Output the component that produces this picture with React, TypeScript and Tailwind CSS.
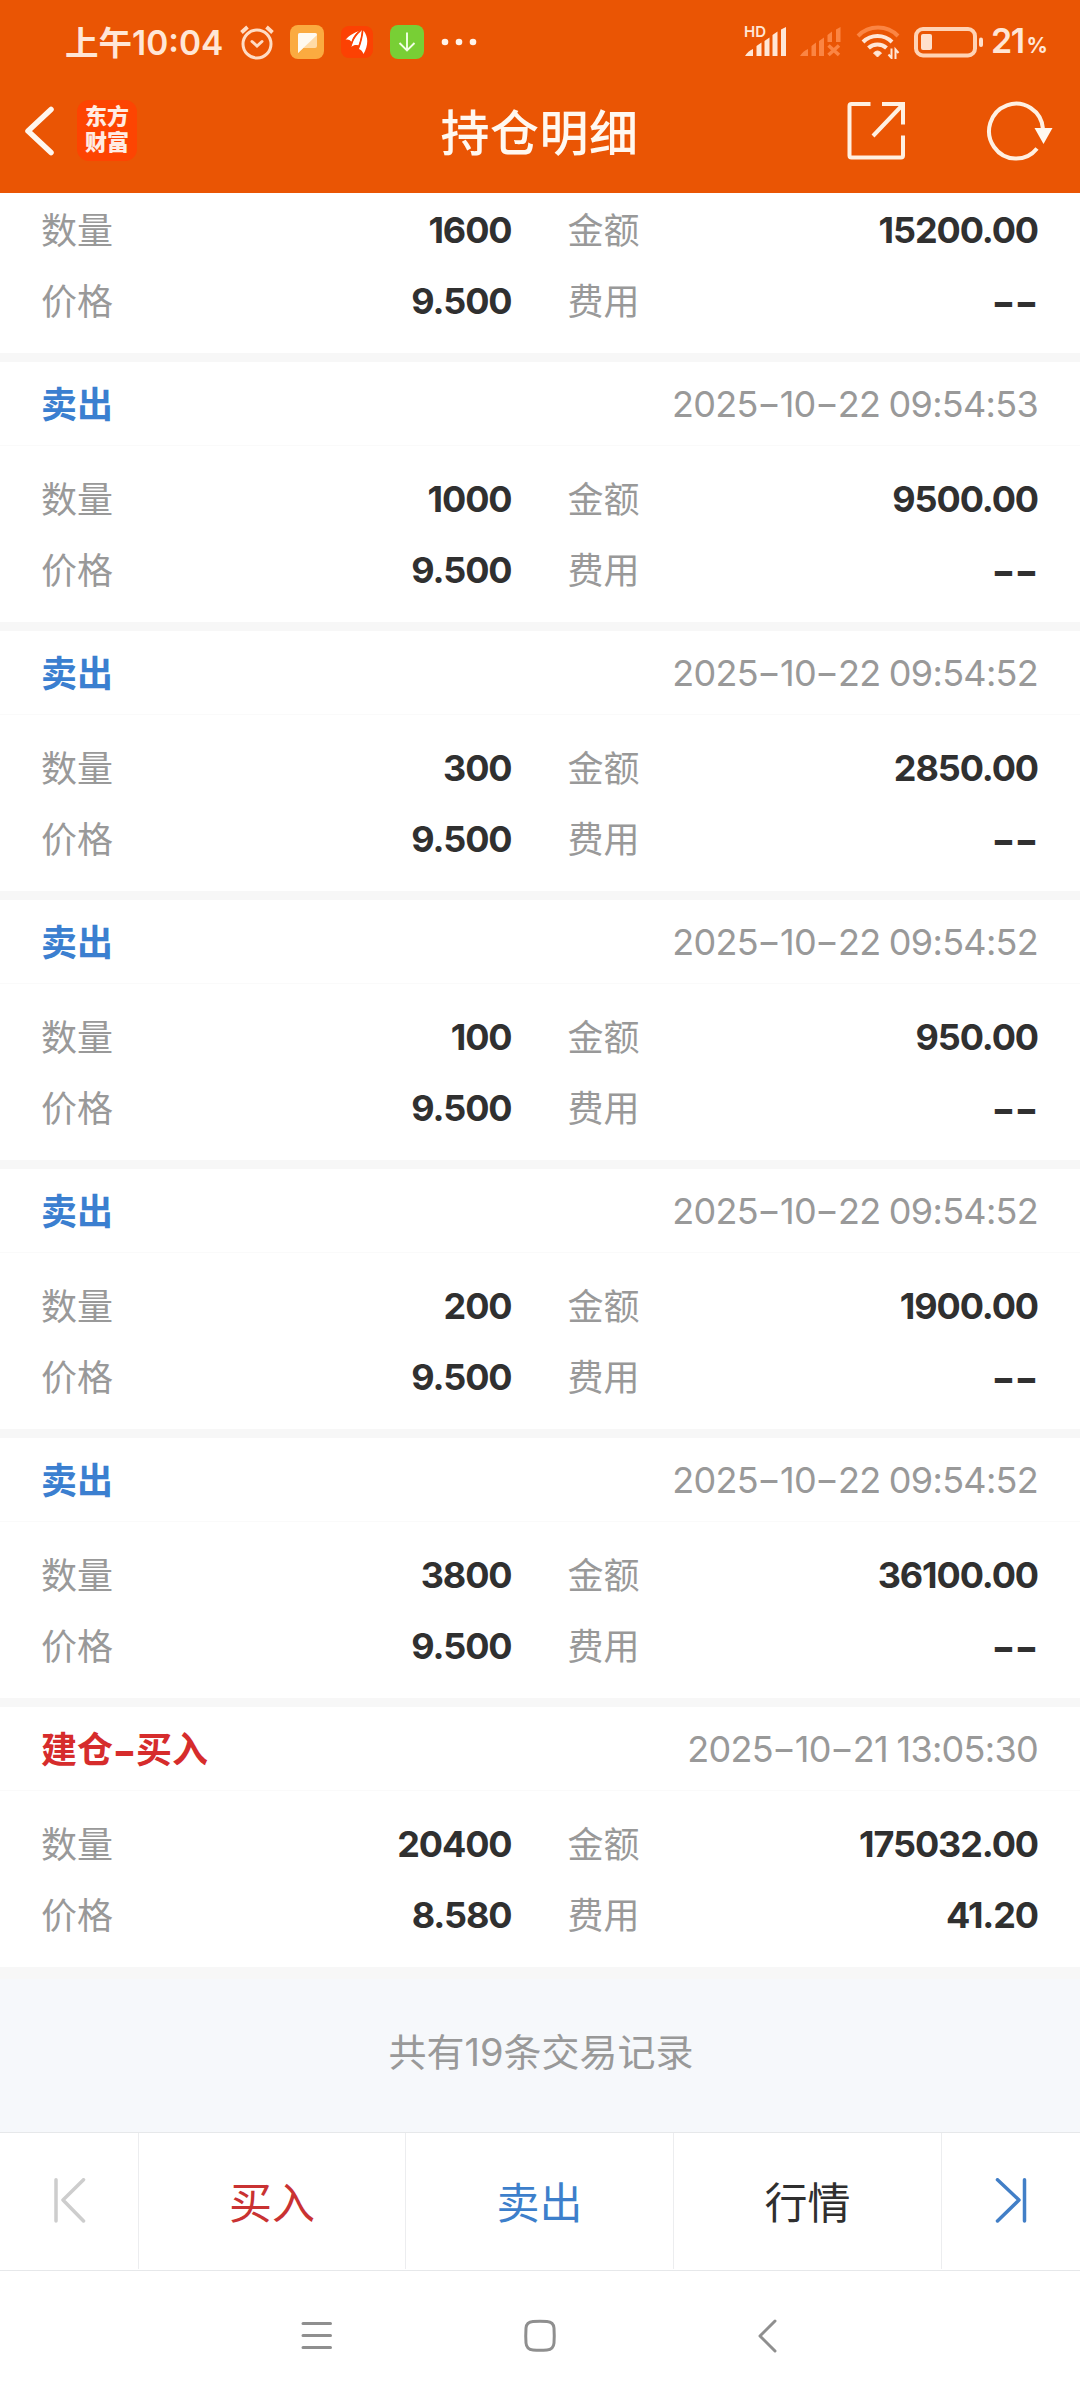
import React from "react";

type Trade = {
  title?: string;
  buy?: boolean;
  time?: string;
  qty: string;
  amount: string;
  price: string;
  fee: string;
};

const trades: Trade[] = [
  { qty: "1600", amount: "15200.00", price: "9.500", fee: "--" },
  { title: "卖出", time: "2025-10-22 09:54:53", qty: "1000", amount: "9500.00", price: "9.500", fee: "--" },
  { title: "卖出", time: "2025-10-22 09:54:52", qty: "300", amount: "2850.00", price: "9.500", fee: "--" },
  { title: "卖出", time: "2025-10-22 09:54:52", qty: "100", amount: "950.00", price: "9.500", fee: "--" },
  { title: "卖出", time: "2025-10-22 09:54:52", qty: "200", amount: "1900.00", price: "9.500", fee: "--" },
  { title: "卖出", time: "2025-10-22 09:54:52", qty: "3800", amount: "36100.00", price: "9.500", fee: "--" },
  { title: "建仓-买入", buy: true, time: "2025-10-21 13:05:30", qty: "20400", amount: "175032.00", price: "8.580", fee: "41.20" },
];

// Hyphens are drawn as wide as a digit.
function WideHyphens({ text, bold = false }: { text: string; bold?: boolean }) {
  return (
    <>
      {text.split(/(-)/).map((part, i) =>
        part === "-" ? (
          <span
            key={i}
            className={
              bold
                ? "inline-block w-[23px] scale-x-[1.45] scale-y-[1.2] text-center tracking-normal"
                : "inline-block w-[22px] scale-x-[1.45] text-center tracking-normal"
            }
          >
            -
          </span>
        ) : (
          part
        ),
      )}
    </>
  );
}

function StatusBar() {
  return (
    <div className="flex h-[84px] items-center pl-[65px] pr-[33px] text-[#ffe6d6]">
      <span className="w-[158px] whitespace-nowrap pt-[2px] text-[33.500px] leading-[40px] font-semibold">
        上午10:04
      </span>
      <svg className="ml-[16px] h-[36px] w-[36px]" viewBox="0 0 36 36" fill="none" stroke="#ffdcc4" strokeWidth="3" strokeLinecap="round">
        <circle cx="18" cy="20" r="14" />
        <path d="M2.500 8.500 L8.500 3 M33.500 8.500 L27.500 3" strokeWidth="3.800" strokeLinecap="butt" />
        <path d="M13 17.500 L18 22 L23 17.500" />
      </svg>
      <svg className="ml-[15px] h-[34px] w-[34px]" viewBox="0 0 34 34">
        <rect width="34" height="34" rx="8" fill="#fbab40" />
        <path d="M10 8 H25 Q27 8 27 10 V21 Q27 23 25 23 H13 L8 28 V10 Q8 8 10 8 Z" fill="#ffdba6" />
        <path d="M10 8 H25 Q27 8 27 10 L8 28 V10 Q8 8 10 8 Z" fill="#fffaf0" />
      </svg>
      <svg className="ml-[16px] h-[34px] w-[34px]" viewBox="0 0 34 34">
        <rect x="1" y="1" width="32" height="32" rx="8" fill="#fc4103" />
        <path d="M5.500 15 C10 9.500 14 8 20 5.500 C15 9 13 12 11.500 17 C9.500 14.500 7.500 14 5.500 15 Z" fill="#fff" />
        <path d="M11.500 22 C13 15 16.500 10 22 5 C21.500 11 20.500 16 18.500 20.500 C16 19.500 13.500 20 11.500 22 Z" fill="#fff" />
        <path d="M19 24 C21.500 18 23 11 23.500 5.500 C28.500 12 28.500 20 23.500 29 C22.500 26.500 21 24.500 19 24 Z" fill="#fff" />
        <path d="M11.500 18.500 C13 13 16 9 21 5 M18.500 22.500 C20.500 16.500 22 11 22.500 5" fill="none" stroke="#fc4103" strokeWidth="1.200" />
      </svg>
      <svg className="ml-[16px] h-[34px] w-[34px]" viewBox="0 0 34 34">
        <rect width="34" height="34" rx="8" fill="#78cf35" />
        <path d="M17 7.500 V25.500 M9.500 18 L17 25.500 L24.500 18" fill="none" stroke="#f1ffe5" strokeWidth="1.900" />
      </svg>
      <svg className="ml-[17px] h-[8px] w-[36px]" viewBox="0 0 36 8" fill="#fff3ea">
        <circle cx="4" cy="4" r="3.300" />
        <circle cx="18" cy="4" r="3.300" />
        <circle cx="32" cy="4" r="3.300" />
      </svg>

      <div className="ml-auto flex items-center">
        <div className="relative h-[30px] w-[41px]">
          <svg className="h-[30px] w-[41px]" viewBox="0 0 41 30" fill="#ffe6d6">
            <path d="M0 29 Q3 24 8 22 V29 Z M11.500 19 L16.500 15.500 V29 H11.500 Z M19.500 14 L24.500 10.500 V29 H19.500 Z M27.500 8 L32.500 4.500 V29 H27.500 Z M36 2.500 L41 0 V29 H36 Z" />
          </svg>
          <span className="absolute -left-[1px] -top-[3px] text-[15px] leading-[15px] font-semibold">HD</span>
        </div>
        <svg className="ml-[14px] h-[30px] w-[41px]" viewBox="0 0 41 30" fill="#fb8543">
          <path d="M0 29 Q3 24 8 22 V29 Z M11.500 19 L16 15.500 V29 H11.500 Z M19 14 L24 10.500 V29 H19 Z M27.500 8 L32 4.500 V15 H27.500 Z M36 2.500 L40.500 0 V15 H36 Z" />
          <path d="M28.500 18.500 L39 28 M39 18.500 L28.500 28" stroke="#fb8543" strokeWidth="3.600" />
        </svg>
        <svg className="ml-[15px] h-[34px] w-[44px]" viewBox="0 0 44 34" fill="none" stroke="#ffe6d6" strokeWidth="4">
          <path d="M2 11 A28 28 0 0 1 42 11" stroke="#fb8543" />
          <path d="M7 17 A20.500 20.500 0 0 1 36 17" />
          <path d="M12.500 23 A13 13 0 0 1 30.500 23" />
          <path d="M21.500 32 L17.500 28 Q21.500 24 25.500 28 Z" fill="#ffe6d6" stroke="#ffe6d6" strokeWidth="1" />
          <path d="M35.500 23.500 V33 L32.500 29.500 M39.500 34 V24.500 L42.500 28" strokeWidth="2" />
        </svg>
        <svg className="ml-[14px] h-[32px] w-[70px]" viewBox="0 0 70 32" fill="none">
          <rect x="2" y="3" width="59" height="26.500" rx="7" stroke="#ffd3b5" strokeWidth="4" />
          <rect x="7" y="8" width="11" height="16" rx="2" fill="#ffe0cc" />
          <rect x="65" y="11.500" width="4" height="9.500" rx="2" fill="#ffe0cc" />
        </svg>
        <div className="ml-[7px] flex w-[56px] items-baseline whitespace-nowrap pt-[2px] font-semibold">
          <span className="text-[34px] leading-[40px] tracking-[-1.500px]">21</span>
          <span className="ml-[3px] text-[21px] leading-[40px] font-bold">%</span>
        </div>
      </div>
    </div>
  );
}

function TitleBar() {
  return (
    <div className="grid h-[109px] grid-cols-[1fr_auto_1fr] items-center pb-[16px] pl-[23px] pr-[27px]">
      <div className="flex items-center">
        <svg className="h-[52px] w-[32px]" viewBox="0 0 32 52" fill="none" stroke="#fff6ee" strokeWidth="5.500" strokeLinecap="round" strokeLinejoin="round">
          <path d="M28 4.500 L5 26 L28 47.500" />
        </svg>
        <div className="ml-[22px] flex h-[61px] w-[60px] flex-col items-center justify-center rounded-[12px] bg-[#fd4402] pb-[3px] text-[22px] leading-[26px] font-black text-[#ffece4]">
          <span>东方</span>
          <span>财富</span>
        </div>
      </div>
      <h1 className="pt-[6px] pl-[3px] text-[49px] leading-[60px] font-medium tracking-[0.500px] text-[#fff8f0]">持仓明细</h1>
      <div className="flex items-center justify-end">
        <svg className="h-[60px] w-[60px]" viewBox="0 0 60 60" fill="none" stroke="#fff0e2" strokeWidth="4">
          <path d="M24.500 3 H5.500 Q3.500 3 3.500 5 V54.500 Q3.500 56.500 5.500 56.500 H55 Q57 56.500 57 54.500 V34.500" />
          <path d="M36 3 H57 V23.500 M56 4.500 L27 35" />
        </svg>
        <svg className="ml-[79px] h-[62px] w-[68px]" viewBox="0 0 68 62" fill="none">
          <path d="M58 29 A27 27.500 0 1 0 52 48.500" stroke="#fff0e2" strokeWidth="4" />
          <path d="M49.500 28 H67.500 L58.500 44 Z" fill="#fff8f0" />
        </svg>
      </div>
    </div>
  );
}

function Field({ label, value }: { label: string; value: string }) {
  return (
    <div className="flex h-[71px] items-center justify-between">
      <span className="pt-[2px] text-[36px] leading-[40px] text-[#999]">{label}</span>
      <span className="text-[36px] leading-[40px] font-bold tracking-[-1.100px] text-[#303030]">
        <WideHyphens text={value} bold />
      </span>
    </div>
  );
}

function TradeCard({ trade, last }: { trade: Trade; last: boolean }) {
  return (
    <section className={last ? "bg-white" : "border-b-[9px] border-[#f7f7f7] bg-white"}>
      {trade.title && (
        <div className="flex h-[84px] items-center justify-between border-b border-[#fafafa] pl-[41px] pr-[42px]">
          <span className={trade.buy ? "pt-[2px] text-[36px] leading-[40px] font-bold text-[#d62c2c]" : "pt-[2px] text-[36px] leading-[40px] font-bold text-[#3b7fd0]"}>
            <WideHyphens text={trade.title} bold />
          </span>
          <time className="whitespace-pre text-[36px] leading-[40px] tracking-[-0.700px] text-[#999] [word-spacing:-1px]">
            <WideHyphens text={trade.time ?? ""} />
          </time>
        </div>
      )}
      <div className={trade.title ? "grid h-[176px] grid-cols-2 content-start gap-x-[56px] pl-[41px] pr-[42px] pt-[17px]" : "grid h-[160px] grid-cols-2 content-start gap-x-[56px] pl-[41px] pr-[42px] pt-[1px]"}>
        <Field label="数量" value={trade.qty} />
        <Field label="金额" value={trade.amount} />
        <Field label="价格" value={trade.price} />
        <Field label="费用" value={trade.fee} />
      </div>
    </section>
  );
}

function BottomTabs() {
  return (
    <div className="grid h-[139px] grid-cols-[139px_267px_268px_268px_138px] divide-x divide-[#ecedef] border-y border-[#e6e8ea] bg-white pb-px text-[43px] leading-[50px]">
      <div className="flex items-center pl-[53px]">
        <svg className="h-[46px] w-[34px]" viewBox="0 0 34 46" fill="none" stroke="#cdcdcd" strokeWidth="3.500" strokeLinecap="round" strokeLinejoin="round">
          <path d="M3 1.750 V43 M30.500 1.750 L10 22 L30.500 43" />
        </svg>
      </div>
      <div className="flex items-center justify-center pt-[4px] text-[#c93232]">买入</div>
      <div className="flex items-center justify-center pt-[4px] text-[#3d7fcb]">卖出</div>
      <div className="flex items-center justify-center pt-[4px] text-[#2f2f2f]">行情</div>
      <div className="flex items-center pl-[53px]">
        <svg className="h-[46px] w-[34px]" viewBox="0 0 34 46" fill="none" stroke="#427fc7" strokeWidth="3.500" strokeLinecap="round" strokeLinejoin="round">
          <path d="M29.500 1.750 V43 M2.500 1.750 L24 22 L2.500 43" />
        </svg>
      </div>
    </div>
  );
}

function SystemNav() {
  return (
    <div className="flex flex-1 items-center bg-white pl-[300px]">
      <svg className="h-[34px] w-[34px]" viewBox="0 0 34 34" fill="none" stroke="#8f8f8f" strokeWidth="3" strokeLinecap="round">
        <path d="M3 4.500 H30.500 M3 16.500 H30.500 M3 28.500 H30.500" />
      </svg>
      <svg className="ml-[189px] h-[34px] w-[34px]" viewBox="0 0 34 34" fill="none" stroke="#8f8f8f" strokeWidth="3">
        <path d="M10 2.500 Q17 2 24 2.500 Q30.500 3 31 9 Q31.500 17 31 24 Q30.500 30.500 24 31 Q17 31.500 10 31 Q3.500 30.500 3 24 Q2.500 17 3 9 Q3.500 3 10 2.500 Z" />
      </svg>
      <svg className="ml-[199px] h-[34px] w-[24px]" viewBox="0 0 24 34" fill="none" stroke="#8f8f8f" strokeWidth="3" strokeLinecap="round" strokeLinejoin="round">
        <path d="M19 2 L4 17 L19 32" />
      </svg>
    </div>
  );
}

export default function App() {
  return (
    <main className="flex h-[2400px] w-[1080px] flex-col overflow-hidden bg-white font-[Inter,'Noto_Sans_CJK_SC',sans-serif]">
      <header className="h-[193px] bg-[#ea5504]">
        <StatusBar />
        <TitleBar />
      </header>
      {trades.map((trade, i) => (
        <TradeCard key={i} trade={trade} last={i === trades.length - 1} />
      ))}
      <div className="flex h-[165px] items-center justify-center border-t-[12px] border-[#f7f7f7] bg-[#f6f8fb] pb-[8px] pl-[2px] text-[38px] leading-[44px] text-[#999]">
        共有19条交易记录
      </div>
      <BottomTabs />
      <SystemNav />
    </main>
  );
}
